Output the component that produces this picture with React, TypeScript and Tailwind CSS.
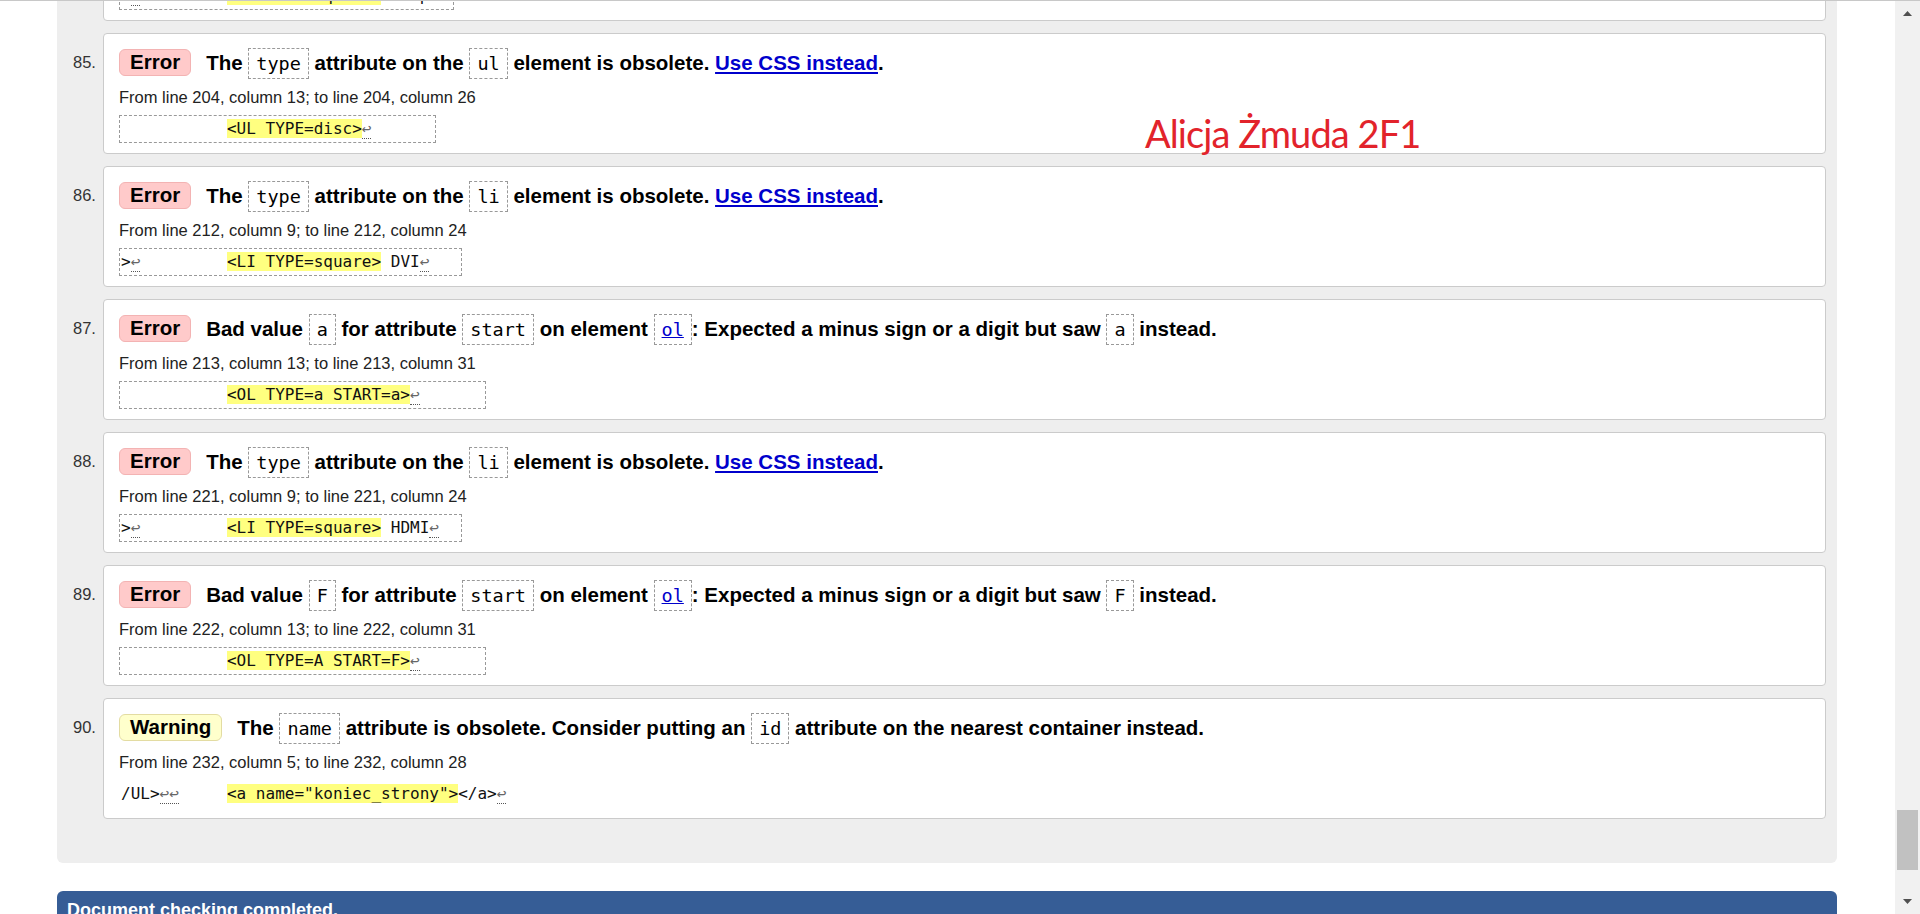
import React from 'react';

type Part = string | { code: string; link?: boolean } | { href: string };
type Ex = string | { hl: string } | { br: number };

interface Msg {
  n: number;
  kind: 'Error' | 'Warning';
  msg: Part[];
  from: string;
  extract: Ex[];
  boxW: string;
  boxed?: boolean;
}

const obsolete = (el: string): Part[] => [
  'The ', { code: 'type' }, ' attribute on the ', { code: el }, ' element is obsolete. ', { href: 'Use CSS instead' }, '.',
];
const badStart = (v: string): Part[] => [
  'Bad value ', { code: v }, ' for attribute ', { code: 'start' }, ' on element ', { code: 'ol', link: true },
  ': Expected a minus sign or a digit but saw ', { code: v }, ' instead.',
];

const messages: Msg[] = [
  {
    n: 84, kind: 'Error', msg: obsolete('li'),
    from: 'From line 203, column 9; to line 203, column 24',
    extract: ['>', { br: 1 }, '         ', { hl: '<LI TYPE=square>' }, ' Displ'],
    boxW: 'w-[335px]', boxed: true,
  },
  {
    n: 85, kind: 'Error', msg: obsolete('ul'),
    from: 'From line 204, column 13; to line 204, column 26',
    extract: ['           ', { hl: '<UL TYPE=disc>' }, { br: 1 }],
    boxW: 'w-[317px]', boxed: true,
  },
  {
    n: 86, kind: 'Error', msg: obsolete('li'),
    from: 'From line 212, column 9; to line 212, column 24',
    extract: ['>', { br: 1 }, '         ', { hl: '<LI TYPE=square>' }, ' DVI', { br: 1 }],
    boxW: 'w-[343px]', boxed: true,
  },
  {
    n: 87, kind: 'Error', msg: badStart('a'),
    from: 'From line 213, column 13; to line 213, column 31',
    extract: ['           ', { hl: '<OL TYPE=a START=a>' }, { br: 1 }],
    boxW: 'w-[367px]', boxed: true,
  },
  {
    n: 88, kind: 'Error', msg: obsolete('li'),
    from: 'From line 221, column 9; to line 221, column 24',
    extract: ['>', { br: 1 }, '         ', { hl: '<LI TYPE=square>' }, ' HDMI', { br: 1 }],
    boxW: 'w-[343px]', boxed: true,
  },
  {
    n: 89, kind: 'Error', msg: badStart('F'),
    from: 'From line 222, column 13; to line 222, column 31',
    extract: ['           ', { hl: '<OL TYPE=A START=F>' }, { br: 1 }],
    boxW: 'w-[367px]', boxed: true,
  },
  {
    n: 90, kind: 'Warning',
    msg: [
      'The ', { code: 'name' }, ' attribute is obsolete. Consider putting an ', { code: 'id' },
      ' attribute on the nearest container instead.',
    ],
    from: 'From line 232, column 5; to line 232, column 28',
    extract: ['/UL>', { br: 2 }, '     ', { hl: '<a name="koniec_strony">' }, '</a>', { br: 1 }],
    boxW: 'w-auto',
  },
];

function Message({ parts }: { parts: Part[] }) {
  return (
    <p className="text-[20.5px] font-bold leading-[31px] text-black">
      {parts.map((p, i) => {
        if (typeof p === 'string') return <span key={i}>{p}</span>;
        if ('href' in p) return <a key={i} href="#" className="text-[#0000cc] underline">{p.href}</a>;
        return (
          <code key={i}
            className="inline-block border border-dashed border-[#999] px-[7px] py-[4px] font-['DejaVu_Sans_Mono',monospace] text-[18.5px] font-normal leading-[21px]">
            {p.link ? <a href="#" className="text-[#0000cc] underline">{p.code}</a> : p.code}
          </code>
        );
      })}
    </p>
  );
}

function Extract({ parts, w, boxed }: { parts: Ex[]; w: string; boxed?: boolean }) {
  return (
    <div className="mt-[7px] flex">
      <code className={`block h-[28px] ${w} border border-dashed ${boxed ? 'border-[#999]' : 'border-transparent'} px-[1px] font-['DejaVu_Sans_Mono',monospace] text-[16px] leading-[26px] whitespace-pre text-[#111]`}>
        {parts.map((p, i) => {
          if (typeof p === 'string') return <span key={i}>{p}</span>;
          if ('hl' in p) return <b key={i} className="bg-[#ffff80] font-normal">{p.hl}</b>;
          return (
            <span key={i} className="inline-block border-b border-dotted border-[#555] text-[16px] leading-[19px] text-[#666]">
              {'↩'.repeat(p.br)}
            </span>
          );
        })}
      </code>
    </div>
  );
}

function Card({ m }: { m: Msg }) {
  const badge = m.kind === 'Error'
    ? 'bg-[#ffcaca] border-[#f3b3b3]'
    : 'bg-[#ffffcc] border-[#e3dca2]';
  return (
    <li className="flex">
      <div className="w-[30px] shrink-0 pt-[14px] text-[16.5px] leading-[31px] text-[#333]">{m.n}.</div>
      <div className="relative flex-1 rounded-[4px] border border-[#cbcbcb] bg-white pt-[13px] pb-[10px] pl-[15px] pr-[15px]">
        <div className="flex h-[31px] items-center gap-[15px]">
          <strong className={`flex h-[27px] items-center rounded-[6px] border px-[10px] text-[20.5px] font-bold text-black ${badge}`}>
            {m.kind}
          </strong>
          <Message parts={m.msg} />
        </div>
        <p className="mt-[8px] text-[16.5px] leading-[22px] text-[#222]">{m.from}</p>
        <Extract parts={m.extract} w={m.boxW} boxed={m.boxed} />
        {m.n === 85 && (
          <span className="absolute left-[1041px] top-[80px] font-['Lato',sans-serif] text-[38px] leading-none tracking-[-0.9px] text-[#e2232b]">
            Alicja Żmuda 2F1
          </span>
        )}
      </div>
    </li>
  );
}

function Arrow({ up }: { up?: boolean }) {
  return (
    <svg width="9" height="5" viewBox="0 0 9 5" className="fill-[#505050]">
      {up ? <path d="M0 5 L4.5 0 L9 5 Z" /> : <path d="M0 0 L9 0 L4.5 5 Z" />}
    </svg>
  );
}

export default function App() {
  return (
    <div className="flex h-[914px] overflow-hidden border-t border-[#c8c8c8] bg-white font-['Liberation_Sans',Arial,sans-serif]">
      <main className="flex-1 overflow-hidden">
        <div className="ml-[57px] mr-[58px] -mt-[101px] rounded-b-[6px] bg-[#eeeeee] pl-[16px] pr-[11px] pb-[44px]">
          <ol className="flex flex-col gap-[12px]">
            {messages.map((m) => <Card key={m.n} m={m} />)}
          </ol>
        </div>
        <div className="ml-[57px] mr-[58px] mt-[28px] h-[60px] rounded-t-[6px] bg-[#365d96] px-[10px] pt-[6px] text-[18px] font-bold text-white">
          Document checking completed.
        </div>
      </main>
      <aside className="flex w-[25px] shrink-0 flex-col bg-[#f1f1f1]">
        <div className="flex h-[24px] items-center justify-center"><Arrow up /></div>
        <div className="flex-1" />
        <div className="mx-[2px] h-[60px] bg-[#c1c1c1]" />
        <div className="h-[19px]" />
        <div className="flex h-[25px] items-center justify-center"><Arrow /></div>
      </aside>
    </div>
  );
}
